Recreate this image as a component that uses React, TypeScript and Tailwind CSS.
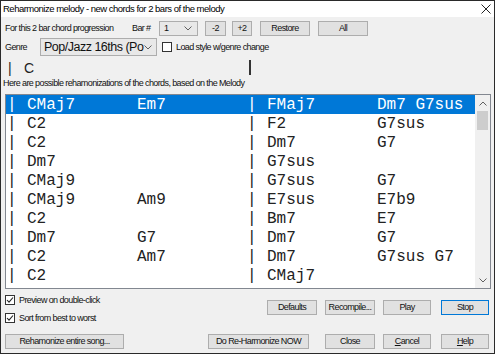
import React from 'react';

const ui = "font-['Liberation_Sans',sans-serif]";
const small = 'text-[9px] tracking-[-0.6px] leading-none whitespace-nowrap';

type Row = [string, string, string, string];

const rows: Row[] = [
  ['CMaj7', 'Em7', 'FMaj7', 'Dm7 G7sus'],
  ['C2', '', 'F2', 'G7sus'],
  ['C2', '', 'Dm7', 'G7'],
  ['Dm7', '', 'G7sus', ''],
  ['CMaj9', '', 'G7sus', 'G7'],
  ['CMaj9', 'Am9', 'E7sus', 'E7b9'],
  ['C2', '', 'Bm7', 'E7'],
  ['Dm7', 'G7', 'Dm7', 'G7'],
  ['C2', 'Am7', 'Dm7', 'G7sus G7'],
  ['C2', '', 'CMaj7', ''],
];

function Chevron({ up }: { up?: boolean }) {
  return (
    <svg width="8" height="5" viewBox="0 0 8 5" className="shrink-0">
      <path
        d={up ? 'M0.5 4.5 L4 1 L7.5 4.5' : 'M0.5 0.5 L4 4 L7.5 0.5'}
        fill="none"
        stroke="#606060"
        strokeWidth="1"
      />
    </svg>
  );
}

function Btn({ w, children, def }: { w: string; children: React.ReactNode; def?: boolean }) {
  return (
    <div
      className={`${w} h-[15px] flex items-center justify-center bg-[#e1e1e1] border ${
        def ? 'border-[#0078d7]' : 'border-[#adadad]'
      } text-[#111] ${small}`}
    >
      {children}
    </div>
  );
}

function Check({ label, on = true }: { label: string; on?: boolean }) {
  return (
    <div className="flex items-center h-[10px]">
      <div className="w-[10px] h-[10px] border border-[#333] bg-white flex items-center justify-center">
        {on && (
          <svg width="8" height="8" viewBox="0 0 8 8">
            <path d="M1 4 L3 6.2 L7 1.5" fill="none" stroke="#222" strokeWidth="1.1" />
          </svg>
        )}
      </div>
      <span className={`ml-[4px] text-[#111] ${small}`}>{label}</span>
    </div>
  );
}

export default function App() {
  return (
    <div className={`w-[495px] h-[354px] bg-[#f0f0f0] border border-[#2a2a2a] flex flex-col overflow-hidden ${ui}`}>
      {/* title bar */}
      <div className="h-[16px] bg-white flex items-center justify-between pl-[2px] pr-[3px]">
        <span className="text-[9.5px] tracking-[-0.5px] text-black leading-none whitespace-nowrap">
          Reharmonize melody - new chords for 2 bars of the melody
        </span>
        <svg width="10" height="10" viewBox="0 0 10 10">
          <path d="M0.5 0.5 L9.5 9.5 M9.5 0.5 L0.5 9.5" stroke="#222" strokeWidth="1" />
        </svg>
      </div>

      {/* bar row */}
      <div className={`mt-[3px] h-[16px] flex items-center pl-[4px] text-[#111] ${small}`}>
        <span className="w-[127px]">For this 2 bar chord progression</span>
        <span className="w-[27px]">Bar #</span>
        <div className="w-[39px] h-[15px] bg-[#e8e8e8] border border-[#adadad] flex items-center justify-between pl-[4px] pr-[5px]">
          <span>1</span>
          <Chevron />
        </div>
        <div className="ml-[7px]">
          <Btn w="w-[21px]">-2</Btn>
        </div>
        <div className="ml-[6px]">
          <Btn w="w-[20px]">+2</Btn>
        </div>
        <div className="ml-[8px]">
          <Btn w="w-[50px]">Restore</Btn>
        </div>
        <div className="ml-[8px]">
          <Btn w="w-[50px]">All</Btn>
        </div>
      </div>

      {/* genre row */}
      <div className={`mt-[2px] h-[18px] flex items-center pl-[4px] text-[#111] ${small}`}>
        <span className="w-[35px]">Genre</span>
        <div className="w-[117px] h-[18px] bg-[#e8e8e8] border border-[#adadad] flex items-center justify-between pl-[3px] pr-[4px]">
          <span className="text-[12.5px] tracking-[-0.5px] whitespace-nowrap">Pop/Jazz 16ths (Po</span>
          <Chevron />
        </div>
        <div className="ml-[5px] w-[10px] h-[10px] border border-[#333] bg-white" />
        <span className="ml-[4px]">Load style w/genre change</span>
      </div>

      {/* current chords */}
      <div className="mt-[3px] h-[17px] flex items-center pl-[7px] text-[14px] text-[#222] leading-none">
        <span className="w-[16px]">|</span>
        <span className="w-[225px]">C</span>
        <div className="w-[2px] h-[15px] bg-[#333]" />
      </div>

      <div className={`mt-[1px] h-[12px] flex items-center pl-[2px] text-[#111] ${small}`}>
        Here are possible rehamonizations of the chords, based on the Melody
      </div>

      {/* list */}
      <div className="mt-[5px] ml-[4px] w-[486px] h-[195px] border border-[#828790] bg-white flex">
        <div className="flex-1 flex flex-col font-['Liberation_Mono',monospace] text-[16px] leading-none">
          {rows.map((r, i) => (
            <div
              key={i}
              className={`h-[19px] shrink-0 flex items-center pl-[1px] whitespace-pre ${
                i === 0 ? 'bg-[#0078d7] text-white' : 'text-[#222]'
              }`}
            >
              <span className="w-[20px]">|</span>
              <span className="w-[110px]">{r[0]}</span>
              <span className="w-[110px]">{r[1]}</span>
              <span className="w-[20px]">|</span>
              <span className="w-[110px]">{r[2]}</span>
              <span>{r[3]}</span>
            </div>
          ))}
        </div>
        {/* scrollbar */}
        <div className="w-[15px] bg-[#f0f0f0] flex flex-col items-center">
          <div className="h-[16px] flex items-center justify-center">
            <Chevron up />
          </div>
          <div className="w-[11px] h-[19px] bg-[#cdcdcd]" />
          <div className="flex-1" />
          <div className="h-[16px] flex items-center justify-center">
            <Chevron />
          </div>
        </div>
      </div>

      {/* options + buttons */}
      <div className="mt-[6px] flex items-start pl-[4px] pr-[5px]">
        <div className="flex flex-col gap-[8px]">
          <Check label="Preview on double-click" />
          <Check label="Sort from best to worst" />
        </div>
        <div className="ml-auto mt-[5px] flex">
          <Btn w="w-[50px]">Defaults</Btn>
          <div className="ml-[8px]">
            <Btn w="w-[50px]">Recompile...</Btn>
          </div>
          <div className="ml-[8px]">
            <Btn w="w-[48px]">Play</Btn>
          </div>
          <div className="ml-[10px]">
            <Btn w="w-[48px]" def>
              Stop
            </Btn>
          </div>
        </div>
      </div>

      <div className="mt-[11px] flex pl-[4px] pr-[5px]">
        <Btn w="w-[119px]">Rehamonize entire song...</Btn>
        <div className="ml-auto flex">
          <Btn w="w-[101px]">Do Re-Harmonize NOW</Btn>
          <div className="ml-[16px]">
            <Btn w="w-[50px]">Close</Btn>
          </div>
          <div className="ml-[8px]">
            <Btn w="w-[48px]">
              <span>
                <span className="underline">C</span>ancel
              </span>
            </Btn>
          </div>
          <div className="ml-[10px]">
            <Btn w="w-[48px]">
              <span>
                <span className="underline">H</span>elp
              </span>
            </Btn>
          </div>
        </div>
      </div>
    </div>
  );
}
